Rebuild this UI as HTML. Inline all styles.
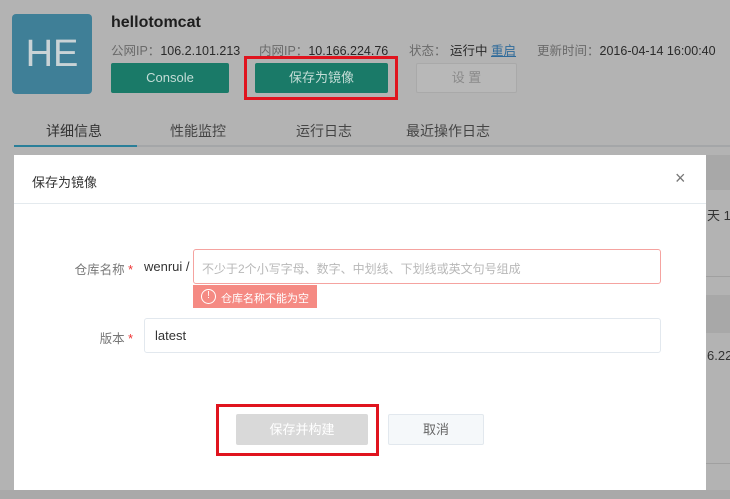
<!DOCTYPE html>
<html><head><meta charset="utf-8"><style>
*{margin:0;padding:0;box-sizing:border-box}
body{width:730px;height:499px;overflow:hidden;background:#b3b3b3;font-family:"Liberation Sans","Noto Sans CJK SC",sans-serif;position:relative}
.a{position:absolute}
</style></head><body>
<div class="a" style="left:12px;top:14px;width:80px;height:80px;background:#3f7f97;border-radius:4px;color:#c9d3d6;font-size:38px;line-height:80px;text-align:center">HE</div>
<div class="a" style="left:111px;top:14px;font-size:16px;font-weight:bold;color:#1e1e1e">hellotomcat</div>
<div class="a" style="left:111px;top:40px;font-size:12.5px;color:#555;white-space:nowrap"><span style="color:#6a6a6a">公网IP：</span><span style="color:#2a2a2a">106.2.101.213</span></div>
<div class="a" style="left:259px;top:40px;font-size:12.5px;white-space:nowrap"><span style="color:#6a6a6a">内网IP：</span><span style="color:#2a2a2a">10.166.224.76</span></div>
<div class="a" style="left:409px;top:40px;font-size:12.5px;white-space:nowrap"><span style="color:#6a6a6a">状态：</span> <span style="color:#2a2a2a">运行中</span> <span style="color:#2e6a9a;text-decoration:underline">重启</span></div>
<div class="a" style="left:537px;top:40px;font-size:12.5px;white-space:nowrap"><span style="color:#6a6a6a">更新时间：</span><span style="color:#2a2a2a">2016-04-14 16:00:40</span></div>
<div class="a" style="left:111px;top:63px;width:118px;height:30px;background:#1a7a68;border-radius:2px;color:#c4ddd7;font-size:13px;line-height:30px;text-align:center">Console</div>
<div class="a" style="left:244px;top:56px;width:154px;height:44px;border:3px solid #e0141e"></div>
<div class="a" style="left:255px;top:63px;width:133px;height:30px;background:#1a7a68;border-radius:2px;color:#c4ddd7;font-size:13px;line-height:30px;text-align:center">保存为镜像</div>
<div class="a" style="left:416px;top:63px;width:101px;height:30px;background:#b8b8b8;border:1px solid #a9a9a9;border-radius:2px;color:#8a8a8a;font-size:13px;line-height:28px;text-align:center">设 置</div>
<div class="a" style="left:46px;top:121px;font-size:14px;color:#333">详细信息</div>
<div class="a" style="left:170px;top:121px;font-size:14px;color:#444">性能监控</div>
<div class="a" style="left:296px;top:121px;font-size:14px;color:#444">运行日志</div>
<div class="a" style="left:406px;top:121px;font-size:14px;color:#444">最近操作日志</div>
<div class="a" style="left:14px;top:145px;width:716px;height:2px;background:#a4a6a8"></div>
<div class="a" style="left:14px;top:145px;width:123px;height:2px;background:#2a7f99"></div>
<div class="a" style="left:706px;top:155px;width:24px;height:35px;background:#a8a8a8"></div>
<div class="a" style="left:706px;top:276px;width:24px;height:1px;background:#a0a0a0"></div>
<div class="a" style="left:706px;top:295px;width:24px;height:38px;background:#a8a8a8"></div>
<div class="a" style="left:706px;top:463px;width:24px;height:1px;background:#a0a0a0"></div>
<div class="a" style="left:0;top:490px;width:730px;height:9px;background:#a9a9a9"></div>
<div class="a" style="left:707px;top:205px;font-size:13px;color:#333;white-space:nowrap">天 15:</div>
<div class="a" style="left:707px;top:348px;font-size:13px;color:#333;white-space:nowrap">6.224</div>
<div class="a" style="left:14px;top:155px;width:692px;height:335px;background:#fff"></div>
<div class="a" style="left:32px;top:172px;font-size:13px;color:#333">保存为镜像</div>
<div class="a" style="left:675px;top:168px;font-size:18px;color:#777">×</div>
<div class="a" style="left:14px;top:203px;width:692px;height:1px;background:#e4eaee"></div>
<div class="a" style="left:60px;top:259px;width:73px;text-align:right;font-size:12.5px;color:#777;white-space:nowrap">仓库名称 <span style="color:#e33">*</span></div>
<div class="a" style="left:144px;top:259px;font-size:13px;color:#333">wenrui /</div>
<div class="a" style="left:193px;top:249px;width:468px;height:35px;border:1px solid #f5a3a0;border-radius:3px"></div>
<div class="a" style="left:202px;top:260px;font-size:12px;color:#b8b8b8;white-space:nowrap">不少于2个小写字母、数字、中划线、下划线或英文句号组成</div>
<div class="a" style="left:193px;top:285px;width:124px;height:23px;background:#f58a83"></div>
<div class="a" style="left:201px;top:289px;width:15px;height:15px;border:1.5px solid #fff;border-radius:50%;color:#fff;font-size:10px;line-height:12px;text-align:center">!</div>
<div class="a" style="left:221px;top:290px;font-size:11px;letter-spacing:0;color:#fff;white-space:nowrap">仓库名称不能为空</div>
<div class="a" style="left:60px;top:328px;width:73px;text-align:right;font-size:12.5px;color:#777;white-space:nowrap">版本 <span style="color:#e33">*</span></div>
<div class="a" style="left:144px;top:318px;width:517px;height:35px;border:1px solid #e2e8ee;border-radius:3px"></div>
<div class="a" style="left:155px;top:328px;font-size:13px;color:#333">latest</div>
<div class="a" style="left:216px;top:404px;width:163px;height:52px;border:3px solid #e0141e"></div>
<div class="a" style="left:236px;top:414px;width:132px;height:31px;background:#d9d9d9;border-radius:2px;color:#fff;font-size:13px;line-height:31px;text-align:center">保存并构建</div>
<div class="a" style="left:388px;top:414px;width:96px;height:31px;background:#f5f8fa;border:1px solid #e2e8ee;border-radius:2px;color:#666;font-size:13px;line-height:29px;text-align:center">取消</div>
</body></html>
